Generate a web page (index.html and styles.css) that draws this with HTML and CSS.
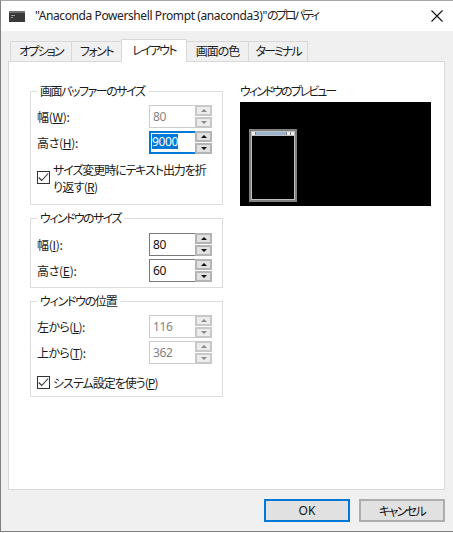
FILE: index.html
```html
<!DOCTYPE html>
<html lang="ja">
<head>
<meta charset="utf-8">
<title>プロパティ</title>
<link rel="stylesheet" href="styles.css">
</head>
<body>
<div class="window">
  <header class="titlebar">
    <svg class="appicon" width="16" height="11" viewBox="0 0 16 11"><rect width="16" height="11" fill="#3a3a3a"/><rect width="16" height="2" fill="#707070"/><path d="M2 4.5h4M2 6.5h2" stroke="#999" stroke-width="1"/></svg>
    <span class="title">"Anaconda Powershell Prompt (anaconda3)"<span class="jp">のプロパティ</span></span>
    <svg class="close" width="12" height="12" viewBox="0 0 12 12"><path d="M.5.5l11 11M11.5.5l-11 11" stroke="#111" stroke-width="1.1" fill="none"/></svg>
  </header>
  <div class="client">
    <nav class="tabs">
      <div class="tab t1">オプション</div>
      <div class="tab t2">フォント</div>
      <div class="tab t3 active">レイアウト</div>
      <div class="tab t4">画面の色</div>
      <div class="tab t5">ターミナル</div>
    </nav>
    <main class="panel">
      <div class="leftcol">
        <fieldset class="group g1">
          <legend>画面バッファーのサイズ</legend>
          <div class="row"><label class="lbl">幅(<u>W</u>):</label>
            <div class="spin disabled"><span class="val">80</span><div class="btns"><b class="up"></b><b class="down"></b></div></div></div>
          <div class="row"><label class="lbl">高さ(<u>H</u>):</label>
            <div class="spin focused"><span class="val"><span class="sel">9000</span></span><div class="btns"><b class="up"></b><b class="down"></b></div></div></div>
          <div class="check wrap"><span class="box"><svg width="11" height="9" viewBox="0 0 11 9"><path d="M.7 4.5l3 3 6.5-7" stroke="#333" stroke-width="1.1" fill="none"/></svg></span><span class="cap"><span class="line1">サイズ変更時にテキスト出力を折</span><br><span class="line2">り返す(<u>R</u>)</span></span></div>
        </fieldset>
        <fieldset class="group g2">
          <legend>ウィンドウのサイズ</legend>
          <div class="row"><label class="lbl">幅(<u>I</u>):</label>
            <div class="spin"><span class="val">80</span><div class="btns"><b class="up"></b><b class="down"></b></div></div></div>
          <div class="row"><label class="lbl">高さ(<u>E</u>):</label>
            <div class="spin"><span class="val">60</span><div class="btns"><b class="up"></b><b class="down"></b></div></div></div>
        </fieldset>
        <fieldset class="group g3">
          <legend>ウィンドウの位置</legend>
          <div class="row"><label class="lbl lbl-pos">左から(<u>L</u>):</label>
            <div class="spin disabled"><span class="val">116</span><div class="btns"><b class="up"></b><b class="down"></b></div></div></div>
          <div class="row"><label class="lbl lbl-pos">上から(<u>T</u>):</label>
            <div class="spin disabled"><span class="val">362</span><div class="btns"><b class="up"></b><b class="down"></b></div></div></div>
          <div class="check single"><span class="box"><svg width="11" height="9" viewBox="0 0 11 9"><path d="M.7 4.5l3 3 6.5-7" stroke="#333" stroke-width="1.1" fill="none"/></svg></span><span class="cap">システム設定を使う(<u>P</u>)</span></div>
        </fieldset>
      </div>
      <section class="previewcol">
        <div class="plabel">ウィンドウのプレビュー</div>
        <div class="preview">
          <div class="mini">
            <div class="minibar"><i class="mb"></i><i class="mt"></i><i class="mb"></i><i class="mb"></i></div>
            <div class="minibody"></div>
          </div>
        </div>
      </section>
    </main>
    <footer class="footer">
      <button class="btn default">OK</button>
      <button class="btn cancel">キャンセル</button>
    </footer>
  </div>
</div>
</body>
</html>
```
FILE: styles.css
```css
* { box-sizing: border-box; }
html, body { margin: 0; padding: 0; background: #fff; }
body { width: 453px; height: 533px; overflow: hidden; font: 12px/16px "Noto Sans CJK JP", "Noto Sans", sans-serif; font-feature-settings: "palt"; color: #1a1a1a; }
.window { width: 453px; height: 532px; border: 1px solid #a8a8a8; border-left-color: #808080; border-bottom-color: #808080; border-right: 0; background: #f0f0f0; display: flex; flex-direction: column; }
.titlebar { height: 30px; background: #fff; display: flex; align-items: center; padding: 0 9px 0 8px; flex: none; }
.appicon { flex: none; margin-right: 10px; }
.title { flex: 1; font: 12px/16px "Noto Sans", "Noto Sans CJK JP", sans-serif; font-feature-settings: "palt"; letter-spacing: -0.4px; color: #222; white-space: nowrap; }
.title .jp { letter-spacing: -2.4px; }
.close { flex: none; margin-right: 1px; }
.client { flex: 1; display: flex; flex-direction: column; padding: 8px 8px 0 7px; }
.tabs { display: flex; align-items: flex-end; height: 22px; padding-left: 2px; flex: none; position: relative; z-index: 1; }
.tab { height: 20px; border: 1px solid #d9d9d9; border-bottom: 0; margin-left: -1px; background: #f0f0f0; text-align: center; line-height: 18px; white-space: nowrap; }
.tab:first-child { margin-left: 0; }
.t1 { width: 62px; letter-spacing: -1.8px; }
.t2 { width: 51px; letter-spacing: -1.5px; }
.t3 { width: 66px; letter-spacing: -1.8px; }
.t4 { width: 63px; letter-spacing: -1px; }
.t5 { width: 60px; letter-spacing: -2px; }
.tab.active { height: 23px; background: #fff; line-height: 19px; margin-bottom: -1px; }
.panel { width: 437px; height: 429px; flex: none; border: 1px solid #d9d9d9; background: #fff; padding: 21px 12px 0 21px; display: flex; gap: 17px; }
.leftcol { width: 193px; display: flex; flex-direction: column; flex: none; }
.group { border: 1px solid #dcdcdc; margin: 0; padding: 0 10px 0 6px; min-width: 0; }
.group legend { padding: 0 3px; line-height: 16px; white-space: nowrap; }
.g1 { height: 122px; padding-top: 6px; }
.g1 legend { letter-spacing: -1.45px; }
.g2 { height: 78px; margin-top: 5px; padding-top: 7px; }
.g2 legend { letter-spacing: -1.6px; }
.g3 { height: 104px; margin-top: 5px; padding-top: 6px; }
.g3 legend { letter-spacing: -1.25px; }
.row { display: flex; align-items: center; justify-content: space-between; height: 23px; margin-bottom: 3px; }
.lbl { white-space: nowrap; letter-spacing: -0.3px; }
.lbl-pos { letter-spacing: -0.6px; }
.spin { width: 63px; height: 23px; display: flex; border: 1px solid #7a7a7a; border-right: 0; background: #fff; flex: none; }
.spin .val { flex: 1; padding-left: 3px; line-height: 21px; font-family: "Noto Sans", sans-serif; letter-spacing: -0.4px; color: #111; }
.spin .btns { width: 17px; margin: -1px 0; display: flex; flex-direction: column; gap: 1px; background: #fff; flex: none; }
.btns b { flex: 1; background: #e1e1e1; border: 2px solid #b4b4b4; display: flex; align-items: center; justify-content: center; }
.btns b::after { content: ""; width: 0; height: 0; border-left: 3.5px solid transparent; border-right: 3.5px solid transparent; }
.btns .up::after { border-bottom: 3px solid #111; }
.btns .down::after { border-top: 3px solid #111; }
.spin.disabled { border-color: #ccc; }
.spin.disabled .val { color: #838383; }
.spin.disabled .btns b { background: #ececec; border-color: #c8c8c8; }
.spin.disabled .up::after { border-bottom-color: #8a8a8a; }
.spin.disabled .down::after { border-top-color: #8a8a8a; }
.spin.focused { border: 2px solid #0078d7; border-right: 0; }
.spin.focused .val { display: flex; align-items: center; padding: 0 0 2px 1px; }
.spin.focused .btns { margin: -2px 0; }
.sel { background: #0078d7; color: #fff; height: 15px; line-height: 15px; }
.check { display: flex; align-items: flex-start; gap: 3px; }
.box { width: 13px; height: 13px; border: 1px solid #333; background: #fff; display: flex; align-items: center; justify-content: center; flex: none; }
.wrap { margin-top: 7px; }
.wrap .box { margin-top: 10px; }
.wrap .cap { white-space: nowrap; line-height: 17px; }
.line1 { letter-spacing: -1.1px; }
.line2 { letter-spacing: -0.7px; }
.single { margin-top: 11px; }
.single .box { margin-top: 1px; }
.single .cap { letter-spacing: -1px; }
.previewcol { width: 191px; flex: none; }
.plabel { height: 19px; line-height: 16px; letter-spacing: -2px; }
.preview { width: 191px; height: 104px; background: #000; padding: 27px 0 0 9px; }
.mini { width: 48px; height: 73px; border: 2px solid #808080; background: #c0c0c0; padding: 1px; display: flex; flex-direction: column; }
.minibar { height: 3px; display: flex; gap: 1px; flex: none; background: #808080; }
.minibar .mb { width: 3px; background: #f0f0f0; }
.minibar .mt { flex: 1; background: #99b4d1; }
.minibody { flex: 1; margin-top: 1px; background: #000; }
.footer { flex: 1; display: flex; justify-content: flex-end; gap: 9px; padding-top: 9px; }
.btn { width: 86px; height: 23px; padding: 0; background: #e1e1e1; border: 2px solid #adadad; font: 12px/16px "Noto Sans CJK JP", "Noto Sans", sans-serif; font-feature-settings: "palt"; color: #111; }
.btn.cancel { letter-spacing: -1.6px; }
.btn.default { border-color: #0078d7; font-family: "Noto Sans", sans-serif; }
```
